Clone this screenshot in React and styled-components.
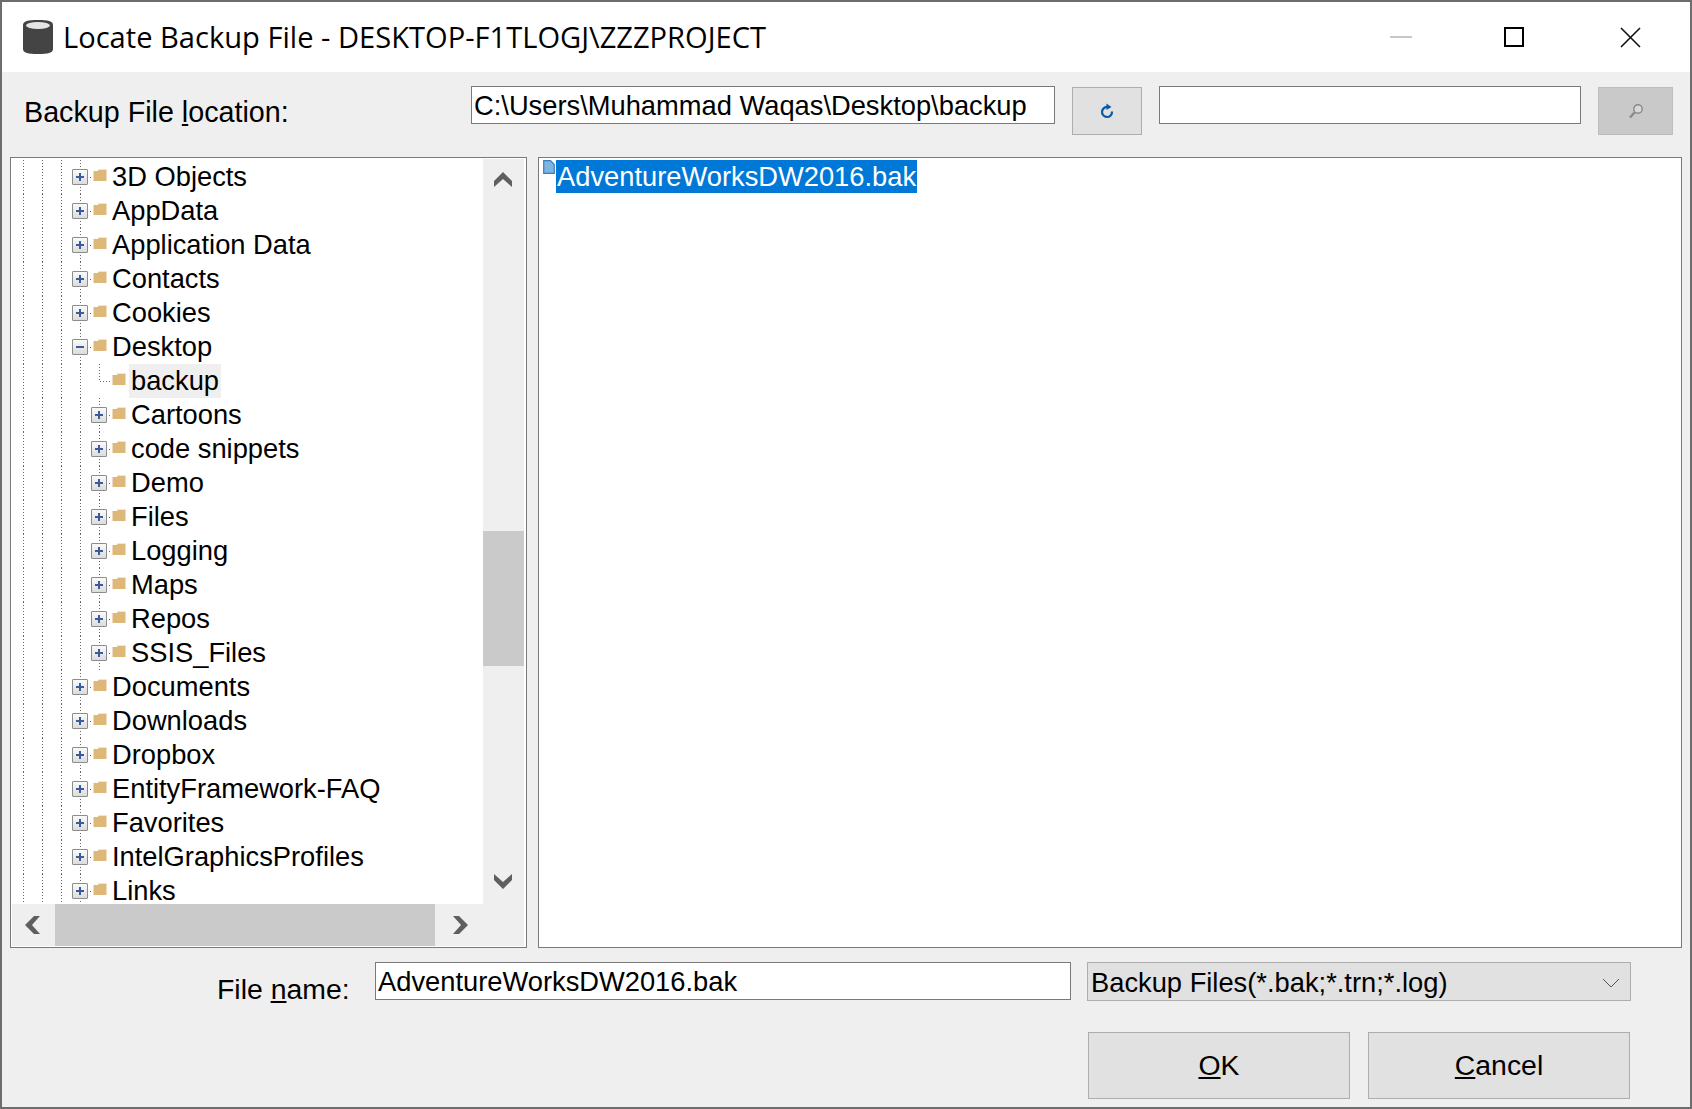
import styled, { createGlobalStyle } from "styled-components";

const GlobalStyle = createGlobalStyle`
  html, body {
    margin: 0;
    padding: 0;
    background: #6d6d6d;
  }
  * {
    box-sizing: border-box;
  }
`;

const topFolders = ["3D Objects", "AppData", "Application Data", "Contacts", "Cookies"];
const desktopFolders = ["Cartoons", "code snippets", "Demo", "Files", "Logging", "Maps", "Repos", "SSIS_Files"];
const lowerFolders = ["Documents", "Downloads", "Dropbox", "EntityFramework-FAQ", "Favorites", "IntelGraphicsProfiles", "Links"];

const Expander = ({ open }) => (
  <ExpanderBox>
    <svg width="10" height="10" viewBox="0 0 10 10">
      <rect x="1" y="4" width="8" height="2" fill="#3c5a9e" />
      {!open && <rect x="4" y="1" width="2" height="8" fill="#3c5a9e" />}
    </svg>
  </ExpanderBox>
);

const FolderIcon = () => (
  <FolderSvg width="14" height="14" viewBox="0 0 14 14">
    <path d="M0.5 3 L0.5 13 L13.5 13 L13.5 1 L6 1 L5 3 Z" fill="#deb878" />
    <path d="M6 1 L13.5 1 L13.5 2 L5.5 2 Z" fill="#f6e7c9" />
  </FolderSvg>
);

const TreeRow = ({ level, name, open, leaf, active }) => (
  <Row>
    {Array.from({ length: level + 3 }, (_, i) => (
      <Guide key={i} />
    ))}
    <ExpanderCell $leaf={leaf}>{!leaf && <Expander open={open} />}</ExpanderCell>
    <FolderIcon />
    <RowLabel $active={active}>{name}</RowLabel>
  </Row>
);

const Chevron = ({ dir }) => {
  const rotate = { up: 0, right: 90, down: 180, left: 270 }[dir];
  return (
    <svg width="18" height="18" viewBox="0 0 18 18">
      <polygon
        points="9,1 18,10 18,16 9,8 0,16 0,10"
        fill="#5f5f5f"
        transform={`rotate(${rotate} 9 9)`}
      />
    </svg>
  );
};

const App = () => (
  <Window>
    <GlobalStyle />
    <TitleBar>
      <svg width="32" height="36" viewBox="0 0 32 36">
        <path
          d="M1 6 C1 2 6 1 16 1 C26 1 31 2 31 6 L31 30 C31 34 26 35 16 35 C6 35 1 34 1 30 Z"
          fill="#444444"
        />
        <ellipse cx="16" cy="6.5" rx="12" ry="3.5" fill="#e6e6e6" />
      </svg>
      <Title>Locate Backup File - DESKTOP-F1TLOGJ\ZZZPROJECT</Title>
      <WindowControls>
        <ControlCell>
          <svg width="22" height="4" viewBox="0 0 22 4">
            <rect y="1" width="22" height="2" fill="#c8c8c8" />
          </svg>
        </ControlCell>
        <ControlCell>
          <MaximizeIcon width="20" height="20" viewBox="0 0 20 20">
            <rect x="1" y="1" width="18" height="18" fill="none" stroke="#000" strokeWidth="2" />
          </MaximizeIcon>
        </ControlCell>
        <ControlCell>
          <svg width="21" height="21" viewBox="0 0 21 21">
            <path d="M1 1 L20 20 M20 1 L1 20" stroke="#111" strokeWidth="1.6" fill="none" />
          </svg>
        </ControlCell>
      </WindowControls>
    </TitleBar>

    <LocationBar>
      <LocationLabel>
        Backup File <u>l</u>ocation:
      </LocationLabel>
      <PathField>C:\Users\Muhammad Waqas\Desktop\backup</PathField>
      <IconButton>
        <svg width="14" height="16" viewBox="0 0 14 16">
          <path
            d="M8.5 4.2 A5 5 0 1 0 12 8.5"
            fill="none"
            stroke="#0b5aa6"
            strokeWidth="2.2"
          />
          <polygon points="6.5,0.5 11.5,4 6.5,7" fill="#0b5aa6" />
        </svg>
      </IconButton>
      <SearchField />
      <IconButton $disabled>
        <svg width="16" height="16" viewBox="0 0 16 16">
          <circle cx="10" cy="6" r="4.2" fill="#d8d8d8" stroke="#8a8a8a" strokeWidth="1.4" />
          <path d="M7 9 L2 14.5" stroke="#8a8a8a" strokeWidth="2.4" />
        </svg>
      </IconButton>
    </LocationBar>

    <Panes>
      <TreePane>
        <TreeScroll>
          <TreeList>
            {topFolders.map((name) => (
              <TreeRow key={name} level={0} name={name} />
            ))}
            <TreeRow level={0} name="Desktop" open />
            <TreeRow level={1} name="backup" leaf active />
            {desktopFolders.map((name) => (
              <TreeRow key={name} level={1} name={name} />
            ))}
            {lowerFolders.map((name) => (
              <TreeRow key={name} level={0} name={name} />
            ))}
          </TreeList>
          <VerticalBar>
            <ArrowCell>
              <Chevron dir="up" />
            </ArrowCell>
            <VerticalTrack>
              <VerticalThumb />
            </VerticalTrack>
            <ArrowCell $bottom>
              <Chevron dir="down" />
            </ArrowCell>
          </VerticalBar>
        </TreeScroll>
        <HorizontalBar>
          <HArrowCell>
            <Chevron dir="left" />
          </HArrowCell>
          <HorizontalThumb />
          <HArrowCell $right>
            <Chevron dir="right" />
          </HArrowCell>
        </HorizontalBar>
      </TreePane>

      <FilePane>
        <FileRow>
          <svg width="12" height="14" viewBox="0 0 12 14">
            <path d="M0.7 0.7 L7.5 0.7 L11.3 4.5 L11.3 13.3 L0.7 13.3 Z" fill="#7db4e2" stroke="#3f7cb8" strokeWidth="1.2" />
          </svg>
          <FileName>AdventureWorksDW2016.bak</FileName>
        </FileRow>
      </FilePane>
    </Panes>

    <NameBar>
      <NameLabel>
        File <u>n</u>ame:
      </NameLabel>
      <NameField>AdventureWorksDW2016.bak</NameField>
      <TypeSelect>
        <span>Backup Files(*.bak;*.trn;*.log)</span>
        <svg width="18" height="10" viewBox="0 0 18 10">
          <path d="M1 1 L9 9 L17 1" fill="none" stroke="#555" strokeWidth="1" />
        </svg>
      </TypeSelect>
    </NameBar>

    <ButtonBar>
      <DialogButton>
        <u>O</u>K
      </DialogButton>
      <DialogButton>
        <u>C</u>ancel
      </DialogButton>
    </ButtonBar>
  </Window>
);

export default App;

const sans = `"Liberation Sans", Arial, sans-serif`;

const Window = styled.div`
  display: flex;
  flex-direction: column;
  width: 1692px;
  height: 1109px;
  overflow: hidden;
  border: 2px solid #6d6d6d;
  background: #efefef;
  color: #000;
  font-family: ${sans};
  font-size: 27.3px;
`;

const TitleBar = styled.div`
  display: flex;
  align-items: center;
  flex: none;
  height: 70px;
  padding-left: 20px;
  background: #fff;
`;

const Title = styled.div`
  margin-left: 9px;
  font-family: "Open Sans", sans-serif;
  font-size: 29.1px;
  white-space: nowrap;
`;

const WindowControls = styled.div`
  display: flex;
  margin-left: auto;
  padding-right: 2px;
`;

const ControlCell = styled.div`
  display: flex;
  align-items: center;
  justify-content: center;
  width: 115px;
  height: 70px;
`;

const MaximizeIcon = styled.svg`
  margin-right: 3px;
`;

const LocationBar = styled.div`
  display: flex;
  align-items: flex-start;
  flex: none;
  height: 85px;
  padding: 14px 0 0 22px;
`;

const LocationLabel = styled.div`
  width: 447px;
  padding-top: 10px;
  font-size: 28.7px;
  line-height: 32px;
`;

const Field = styled.div`
  display: flex;
  align-items: center;
  height: 38px;
  padding: 2px 0 0 2px;
  border: 1px solid #7a7a7a;
  background: #fff;
  white-space: nowrap;
`;

const PathField = styled(Field)`
  width: 584px;
`;

const SearchField = styled(Field)`
  width: 422px;
  margin: 0 17px 0 17px;
`;

const IconButton = styled.div`
  display: flex;
  align-items: center;
  justify-content: center;
  width: ${(p) => (p.$disabled ? "75px" : "70px")};
  height: 48px;
  margin: 1px 0 0 ${(p) => (p.$disabled ? "0" : "17px")};
  border: 1px solid ${(p) => (p.$disabled ? "#bdbdbd" : "#adadad")};
  background: ${(p) => (p.$disabled ? "#c9c9c9" : "#e1e1e1")};
`;

const Panes = styled.div`
  display: flex;
  flex: none;
  gap: 11px;
  height: 791px;
  padding: 0 8px;
`;

const TreePane = styled.div`
  display: flex;
  flex-direction: column;
  width: 517px;
  padding: 1px 2px 1px 1px;
  border: 1px solid #7a7a7a;
  background: #fff;
`;

const TreeScroll = styled.div`
  display: flex;
  height: 745px;
  overflow: hidden;
`;

const TreeList = styled.div`
  flex: 1;
  padding: 1px 0 0 2px;
  overflow: hidden;
`;

const Row = styled.div`
  display: flex;
  align-items: center;
  height: 34px;
  white-space: nowrap;
`;

const dots = `repeating-linear-gradient(to bottom, #666 0 1px, transparent 1px 3px)`;
const hDots = `repeating-linear-gradient(to right, #666 0 1px, transparent 1px 3px)`;

const Guide = styled.span`
  flex: none;
  align-self: stretch;
  width: 19px;
  background: ${dots} center / 1px 100% no-repeat;
`;

const ExpanderCell = styled.span`
  display: flex;
  align-items: center;
  justify-content: center;
  flex: none;
  align-self: stretch;
  width: 22px;
  background:
    ${dots} 9px 0 / 1px ${(p) => (p.$leaf ? "50%" : "100%")} no-repeat,
    ${hDots} 10px 50% / 12px 1px no-repeat;
`;

const ExpanderBox = styled.span`
  display: flex;
  align-items: center;
  justify-content: center;
  width: 16px;
  height: 16px;
  margin: 0 5px 0 1px;
  border: 1px solid #8c8c8c;
  border-radius: 1px;
  background: linear-gradient(#fafafa, #dcdcdc);
`;

const FolderSvg = styled.svg`
  flex: none;
  margin-top: -5px;
`;

const RowLabel = styled.span`
  margin-left: 3px;
  padding: 0 2px;
  line-height: 34px;
  background: ${(p) => (p.$active ? "#efefef" : "transparent")};
`;

const VerticalBar = styled.div`
  display: flex;
  flex-direction: column;
  flex: none;
  width: 41px;
  padding-right: 1px;
  background: #efefef;
`;

const ArrowCell = styled.div`
  display: flex;
  align-items: ${(p) => (p.$bottom ? "flex-start" : "center")};
  justify-content: center;
  flex: none;
  height: 41px;
  padding-top: ${(p) => (p.$bottom ? "9px" : "0")};
`;

const VerticalTrack = styled.div`
  flex: 1;
  padding-top: 331px;
`;

const VerticalThumb = styled.div`
  height: 135px;
  margin-right: -1px;
  background: #cacaca;
`;

const HorizontalBar = styled.div`
  display: flex;
  flex: 1;
  background: #efefef;
`;

const HArrowCell = styled.div`
  display: flex;
  align-items: center;
  justify-content: center;
  flex: none;
  width: 43px;
  padding: ${(p) => (p.$right ? "0 0 0 7px" : "0 2px 0 0")};
`;

const HorizontalThumb = styled.div`
  width: 380px;
  background: #cacaca;
`;

const FilePane = styled.div`
  flex: 1;
  padding: 1px 0 0 4px;
  border: 1px solid #7a7a7a;
  background: #fff;
`;

const FileRow = styled.div`
  display: flex;
  align-items: flex-start;
  padding-top: 1px;
`;

const FileName = styled.span`
  margin-left: 1px;
  height: 33px;
  padding: 0 1px;
  line-height: 33px;
  background: #0078d7;
  color: #fff;
`;

const NameBar = styled.div`
  display: flex;
  align-items: flex-start;
  flex: none;
  height: 84px;
  padding: 14px 0 0 215px;
`;

const NameLabel = styled.div`
  width: 158px;
  padding-top: 11px;
  font-size: 28.4px;
  line-height: 32px;
`;

const NameField = styled(Field)`
  width: 696px;
`;

const TypeSelect = styled.div`
  display: flex;
  align-items: center;
  justify-content: space-between;
  width: 544px;
  height: 39px;
  margin-left: 16px;
  padding: 2px 10px 0 3px;
  border: 1px solid #adadad;
  background: #e1e1e1;
  white-space: nowrap;
`;

const ButtonBar = styled.div`
  display: flex;
  gap: 18px;
  padding-left: 1086px;
`;

const DialogButton = styled.div`
  display: flex;
  align-items: center;
  justify-content: center;
  width: 262px;
  height: 67px;
  border: 1px solid #adadad;
  background: #e1e1e1;
  font-size: 28.4px;
`;
